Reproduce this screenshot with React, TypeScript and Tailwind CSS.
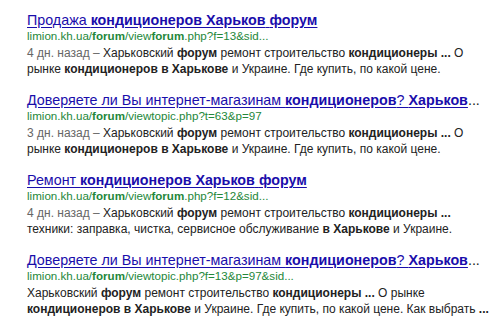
type Part = { t: string; b?: boolean; g?: boolean };

const snippetA: Part[][] = [
  [
    { t: 'Харьковский ' },
    { t: 'форум', b: true },
    { t: ' ремонт строительство ' },
    { t: 'кондиционеры ...', b: true },
    { t: ' О' },
  ],
  [
    { t: 'рынке ' },
    { t: 'кондиционеров в Харькове', b: true },
    { t: ' и Украине. Где купить, по какой цене.' },
  ],
];

const results: { title: Part[]; ellipsis?: boolean; url: Part[]; lines: Part[][] }[] = [
  {
    title: [
      { t: 'Продажа ' },
      { t: 'кондиционеров Харьков', b: true },
      { t: ' ' },
      { t: 'форум', b: true },
    ],
    url: [
      { t: 'limion.kh.ua/' },
      { t: 'forum', b: true },
      { t: '/view' },
      { t: 'forum', b: true },
      { t: '.php?f=13&sid...' },
    ],
    lines: [[{ t: '4 дн. назад – ', g: true }, ...snippetA[0]], snippetA[1]],
  },
  {
    title: [
      { t: 'Доверяете ли Вы интернет-магазинам ' },
      { t: 'кондиционеров', b: true },
      { t: '? ' },
      { t: 'Харьков', b: true },
    ],
    ellipsis: true,
    url: [
      { t: 'limion.kh.ua/' },
      { t: 'forum', b: true },
      { t: '/viewtopic.php?t=63&p=97' },
    ],
    lines: [[{ t: '3 дн. назад – ', g: true }, ...snippetA[0]], snippetA[1]],
  },
  {
    title: [
      { t: 'Ремонт ' },
      { t: 'кондиционеров Харьков', b: true },
      { t: ' ' },
      { t: 'форум', b: true },
    ],
    url: [
      { t: 'limion.kh.ua/' },
      { t: 'forum', b: true },
      { t: '/view' },
      { t: 'forum', b: true },
      { t: '.php?f=12&sid...' },
    ],
    lines: [
      [
        { t: '4 дн. назад – ', g: true },
        { t: 'Харьковский ' },
        { t: 'форум', b: true },
        { t: ' ремонт строительство ' },
        { t: 'кондиционеры ...', b: true },
      ],
      [
        { t: 'техники: заправка, чистка, сервисное обслуживание ' },
        { t: 'в Харькове', b: true },
        { t: ' и Украине.' },
      ],
    ],
  },
  {
    title: [
      { t: 'Доверяете ли Вы интернет-магазинам ' },
      { t: 'кондиционеров', b: true },
      { t: '? ' },
      { t: 'Харьков', b: true },
    ],
    ellipsis: true,
    url: [
      { t: 'limion.kh.ua/' },
      { t: 'forum', b: true },
      { t: '/viewtopic.php?f=13&p=97&sid...' },
    ],
    lines: [
      [
        { t: 'Харьковский ' },
        { t: 'форум', b: true },
        { t: ' ремонт строительство ' },
        { t: 'кондиционеры ...', b: true },
        { t: ' О рынке' },
      ],
      [
        { t: 'кондиционеров в Харькове', b: true },
        { t: ' и Украине. Где купить, по какой цене. Как выбрать ' },
        { t: '...', b: true },
      ],
    ],
  },
];

function Parts({ parts }: { parts: Part[] }) {
  return (
    <>
      {parts.map((p, i) =>
        p.b ? (
          <b key={i} className="font-bold">{p.t}</b>
        ) : p.g ? (
          <span key={i} className="text-[#666]">{p.t}</span>
        ) : (
          <span key={i}>{p.t}</span>
        )
      )}
    </>
  );
}

export default function App() {
  return (
    <div className="w-[500px] h-[322px] bg-white overflow-hidden pl-[27px] pt-[11px] font-['Liberation_Sans',Arial,sans-serif]">
      {results.map((r, i) => (
        <div key={i} className="h-[80px]">
          <div className="text-[14.3px] leading-[18px] text-[#1a0dab] whitespace-nowrap">
            <a href="#" className="underline underline-offset-[2px]">
              <Parts parts={r.title} />
            </a>
            {r.ellipsis && <span className="text-[#222]">...</span>}
          </div>
          <div className="text-[11.6px] leading-[14px] text-[#24873a] whitespace-nowrap">
            <Parts parts={r.url} />
          </div>
          <div className="mt-[2px] text-[12px] leading-[16px] text-[#222]">
            {r.lines.map((line, j) => (
              <div key={j} className="whitespace-nowrap">
                <Parts parts={line} />
              </div>
            ))}
          </div>
        </div>
      ))}
    </div>
  );
}
